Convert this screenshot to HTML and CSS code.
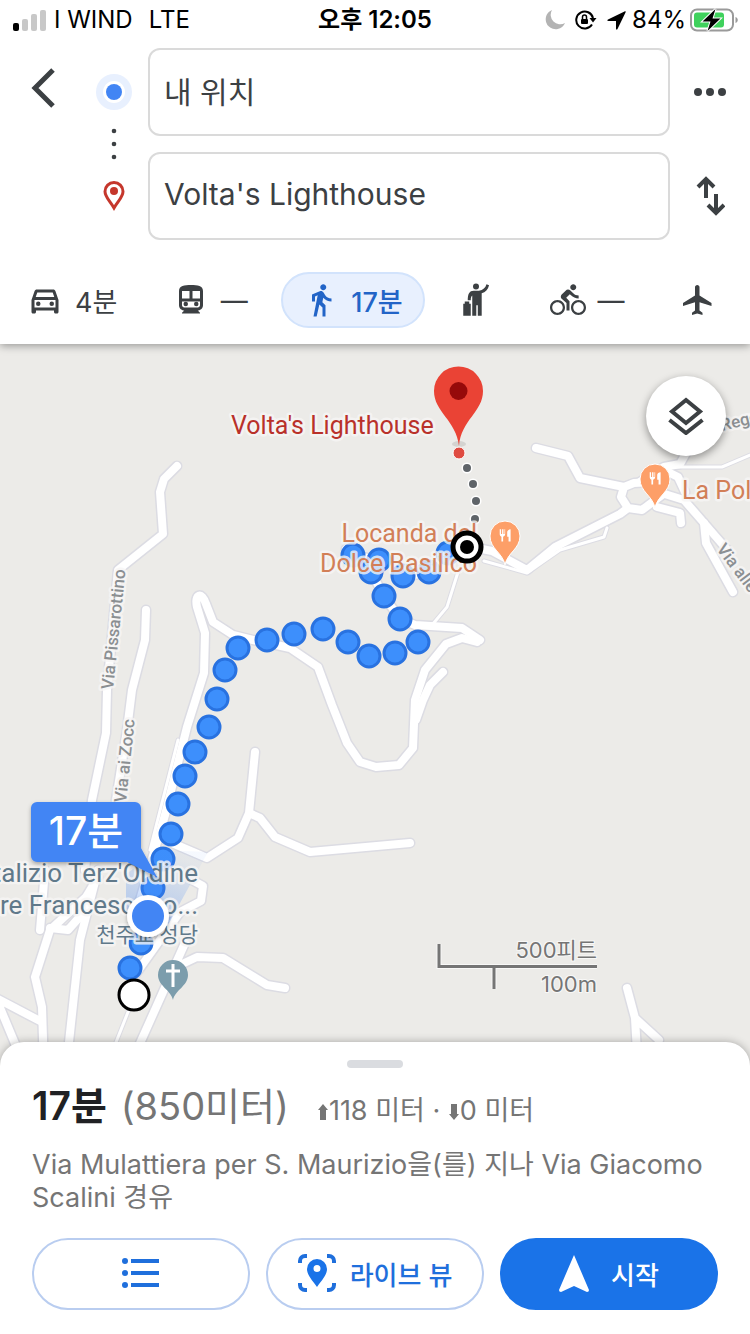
FILE: index.html
```html
<!DOCTYPE html>
<html lang="ko">
<head>
    <meta charset="UTF-8">
    <meta name="viewport" content="width=device-width, initial-scale=1.0">
    <title>Volta's Lighthouse</title>
    <link rel="stylesheet" href="styles.css">
</head>
<body>
    <header class="header">
        <div class="status-bar">
            <div class="status-left">
                <svg class="signal" width="34" height="22" viewBox="0 0 34 22">
                    <rect x="1" y="14" width="6" height="8" rx="2" fill="#000"/>
                    <rect x="10" y="10" width="6" height="12" rx="2" fill="#c8c8c8"/>
                    <rect x="19" y="5" width="6" height="17" rx="2" fill="#c8c8c8"/>
                    <rect x="28" y="1" width="6" height="21" rx="2" fill="#c8c8c8"/>
                </svg>
                <span>I WIND</span>
                <span class="network">LTE</span>
            </div>
            <div class="status-time">오후 12:05</div>
            <div class="status-right">
                <svg width="20" height="20" viewBox="0 0 20 20">
                    <path d="M7 0A10 10 0 1 0 20 13A9.500 9.500 0 0 1 7 0Z" fill="#b3b3b3"/>
                </svg>
                <svg class="lock" width="22" height="20" viewBox="0 0 22 20">
                    <path d="M17 14.500A8.500 8.500 0 1 1 18 8" fill="none" stroke="#000" stroke-width="2"/>
                    <path d="M14.500 8H21.500L18 12.500Z" fill="#000"/>
                    <rect x="6" y="9" width="7" height="5" rx="1" fill="#000"/>
                    <path d="M7.500 9V7a2 2 0 0 1 4 0V9" fill="none" stroke="#000" stroke-width="1.500"/>
                </svg>
                <svg width="19" height="19" viewBox="0 0 19 19">
                    <path d="M18.500 1.500C19 .5 18.500 0 17.500.5L1 8.500C0 9 0 10 1.500 10H9V17.500C9 19 10 19 10.500 18Z" fill="#000"/>
                </svg>
                <span class="percent">84%</span>
                <svg width="48" height="24" viewBox="0 0 48 24">
                    <rect x="1" y="1.500" width="42" height="21" rx="6" fill="none" stroke="#9a9a9a" stroke-width="2"/>
                    <rect x="4" y="4.500" width="30" height="15" rx="3" fill="#3fd15c"/>
                    <path d="M45.500 9v6c3-1 3-5 0-6z" fill="#9a9a9a"/>
                    <path d="M25.500 1L12.500 13.500h8L17.500 23L30.500 10.500h-8z" fill="#000" stroke="#fff" stroke-width="2" paint-order="stroke"/>
                </svg>
            </div>
        </div>

        <form class="route-form">
            <button type="button" class="icon-btn back-btn" aria-label="뒤로">
                <svg width="32" height="42" viewBox="0 0 32 42">
                    <path d="M26 3L8 21L26 39" fill="none" stroke="#3c4043" stroke-width="5"/>
                </svg>
            </button>
            <div class="route-marks">
                <svg width="40" height="192" viewBox="0 0 40 192">
                    <circle cx="20" cy="44" r="18" fill="#e8f0fe"/>
                    <circle cx="20" cy="44" r="11" fill="#fff"/>
                    <circle cx="20" cy="44" r="8" fill="#4285f4"/>
                    <g fill="#3c4043">
                        <circle cx="20" cy="83" r="2.300"/>
                        <circle cx="20" cy="96" r="2.300"/>
                        <circle cx="20" cy="109" r="2.300"/>
                    </g>
                    <path d="M20 160C16 153 11 149 11 143.500a9 9 0 0 1 18 0C29 149 24 153 20 160Z" fill="none" stroke="#c5372c" stroke-width="3"/>
                    <circle cx="20" cy="143" r="4" fill="#c5372c"/>
                </svg>
            </div>
            <input class="route-input" type="text" value="내 위치" aria-label="출발지">
            <button type="button" class="icon-btn" aria-label="더보기">
                <svg width="32" height="8" viewBox="0 0 32 8" fill="#3c4043">
                    <circle cx="4" cy="4" r="4"/>
                    <circle cx="16" cy="4" r="4"/>
                    <circle cx="28" cy="4" r="4"/>
                </svg>
            </button>
            <input class="route-input" type="text" value="Volta's Lighthouse" aria-label="도착지">
            <button type="button" class="icon-btn" aria-label="출발지와 도착지 바꾸기">
                <svg width="30" height="40" viewBox="0 0 30 40" fill="none" stroke="#3c4043" stroke-width="4">
                    <path d="M11 22V4M3 11L11 3L19 11M21 18V36M13 29L21 37L29 29"/>
                </svg>
            </button>
        </form>

        <nav class="modes">
            <button type="button" class="mode">
                <svg class="mode-icon" viewBox="0 0 24 24">
                    <path d="M18.920 6.010C18.720 5.420 18.160 5 17.500 5h-11c-.66 0-1.210.42-1.420 1.010L3 12v8c0 .55.45 1 1 1h1c.55 0 1-.45 1-1v-1h12v1c0 .55.45 1 1 1h1c.55 0 1-.45 1-1v-8zM6.850 7h10.290l1.040 3H5.810zM19 17H5v-5h14z"/>
                    <circle cx="7.500" cy="14.500" r="1.500"/>
                    <circle cx="16.500" cy="14.500" r="1.500"/>
                </svg>
                <span>4분</span>
            </button>
            <button type="button" class="mode">
                <svg class="mode-icon" viewBox="0 0 24 24">
                    <path fill-rule="evenodd" d="M12 2c-4.420 0-8 .5-8 4v9.500C4 17.430 5.570 19 7.500 19L6 20.500v.5h12v-.5L16.500 19c1.930 0 3.500-1.570 3.500-3.500V6c0-3.500-3.580-4-8-4zM6 6v5h5V6zM13 6v5h5V6zM6 13v2.500c0 .8.700 1.500 1.500 1.500h9c.8 0 1.500-.7 1.500-1.500V13z"/>
                    <circle cx="8.500" cy="14.700" r="1.500"/>
                    <circle cx="15.500" cy="14.700" r="1.500"/>
                </svg>
                <span>—</span>
            </button>
            <button type="button" class="mode mode-active">
                <svg class="mode-icon" viewBox="0 0 24 24">
                    <path d="M13.500 5.500c1.100 0 2-.9 2-2s-.9-2-2-2-2 .9-2 2 .9 2 2 2zM9.800 8.900L7 23h2.100l1.800-8 2.100 2v6h2v-7.500l-2.100-2 .6-3C14.800 12 16.800 13 19 13v-2c-1.900 0-3.500-1-4.300-2.400l-1-1.600c-.4-.6-1-1-1.700-1-.3 0-.5.1-.8.1L6 8.300V13h2V9.600z"/>
                </svg>
                <span>17분</span>
            </button>
            <button type="button" class="mode" aria-label="차량 서비스">
                <svg class="mode-icon" viewBox="0 0 24 24">
                    <circle cx="12" cy="3" r="2"/>
                    <path d="M10.500 5.800h3.500c2.700-.5 4.300-1.800 5-4.300l1.700.6c-.7 3-2.400 4.600-4.900 5.400V22.500h-2.600v-7h-1v7H9.500V9c-.7.600-1 1.500-1 3.200H6.500C6.500 8 7.500 5.800 10.500 5.800zM3.500 14.500h1v-1.500h3v1.500h1v8h-5z"/>
                </svg>
            </button>
            <button type="button" class="mode">
                <svg class="mode-icon" viewBox="0 0 24 24">
                    <path d="M15.500 5.500c1.100 0 2-.9 2-2s-.9-2-2-2-2 .9-2 2 .9 2 2 2zM5 12c-2.800 0-5 2.200-5 5s2.200 5 5 5 5-2.200 5-5-2.200-5-5-5zm0 8.500c-1.900 0-3.500-1.600-3.500-3.500s1.600-3.500 3.500-3.500 3.500 1.600 3.500 3.500-1.600 3.500-3.500 3.500zm5.800-10l2.400-2.400.8.800c1.300 1.300 3 2.100 5.100 2.100V9c-1.500 0-2.700-.6-3.600-1.500l-1.900-1.900c-.5-.4-1-.6-1.600-.6s-1.100.2-1.400.6L7.800 8.400c-.4.4-.6.9-.6 1.400 0 .6.2 1.100.6 1.400L11 14v5h2v-6.200zM19 12c-2.800 0-5 2.200-5 5s2.200 5 5 5 5-2.200 5-5-2.200-5-5-5zm0 8.500c-1.900 0-3.500-1.600-3.500-3.500s1.600-3.500 3.500-3.500 3.500 1.600 3.500 3.500-1.600 3.500-3.500 3.500z"/>
                </svg>
                <span>—</span>
            </button>
            <button type="button" class="mode" aria-label="항공편">
                <svg class="mode-icon" viewBox="0 0 24 24">
                    <path d="M21 16v-2l-8-5V3.500c0-.83-.67-1.500-1.500-1.500S10 2.670 10 3.500V9l-8 5v2l8-2.500V19l-2 1.500V22l3.500-1 3.500 1v-1.500L13 19v-5.500z"/>
                </svg>
            </button>
        </nav>
    </header>

    <main class="map">
        <svg class="map-canvas" viewBox="0 344 750 722" preserveAspectRatio="xMidYMin slice">
            <defs>
                <g id="roads-main">
                    <path d="M177 466L164 479L160 492L163 534L118 570L107 690L106 733L92 800L85 870"/>
                    <path d="M146 610L145 640L132 690L127 730L116 800"/>
                    <path d="M140 900L165 815L187 727L204 673L205 633L197 607C194 594 202 591 206 604L213 622L233 635L253 640L290 648L318 667L332 705L347 743L360 762L376 767L399 765L413 748L415 700L425 670L446 644L462 638L477 642"/>
                    <path d="M400 619L415 625L462 628L480 640"/>
                    <path d="M443 672L430 685L423 700L416 720"/>
                    <path d="M346 549L352 555L378 560M371 572L384 596L400 619M403 576L429 573L446 553L467 546L492 551L527 570L555 547L620 514L628 508"/>
                    <path d="M628 508L621 497L624 487L634 483L652 482L662 495L642 510Z"/>
                    <path d="M536 448L568 456L580 478L624 487"/>
                    <path d="M640 482L664 467L680 464L690 446"/>
                    <path d="M664 470L678 477L685 492M655 491L684 500L704 523L730 553"/>
                    <path d="M657 507L680 513L681 523M704 523L706 543L733 592"/>
                    <path d="M255 752L249 813L238 838L207 858L165 840M249 813L260 818L275 837L310 852L410 843"/>
                    <path d="M45 870L40 930M98 877L86 897L50 930L35 977L42 1007L44 1070"/>
                    <path d="M98 870L80 940L66 1070M50 928L68 930L84 912M-4 998L40 1021M-4 998L26 1070"/>
                    <path d="M285 988L267 985L223 958L197 957L178 966M185 943L167 983L128 1070"/>
                    <path d="M190 879L203 886L201 901L180 912L135 975"/>
                    <path d="M627 988L635 1018L659 1040M635 1018L638 1070"/>
                </g>
                <g id="roads-thin">
                    <path d="M458 572L447 607L432 625"/>
                    <path d="M676 467H722L755 453"/>
                    <path d="M484 561L527 573L560 550L604 537L607 528"/>
                    <path d="M128 1012L105 1070M178 740L150 850"/>
                </g>
                <g id="food-pin">
                    <path d="M0 24C-2 12-15 8-15-5a15 15 0 0 1 30 0C15 8 2 12 0 24Z" fill="#fd9f68" stroke="#fff" stroke-width="1"/>
                    <path transform="translate(-8 -13) scale(.68)" d="M11 9H9.500V2h-2v7H6V2H4v7c0 2 1 3.500 2.500 4V20H9v-7c1.700-.5 3-2 3-4V2h-1zM15 6v7h2v7h3V2c-2.800 0-5 2-5 4z" fill="#fff"/>
                </g>
                <linearGradient id="beam" x1="0" y1="1" x2="0.400" y2="0">
                    <stop offset="0" stop-color="#4285f4" stop-opacity="0.400"/>
                    <stop offset="1" stop-color="#4285f4" stop-opacity="0.050"/>
                </linearGradient>
                <filter id="shade" x="-20%" y="-20%" width="140%" height="150%">
                    <feDropShadow dx="0" dy="2" stdDeviation="2" flood-opacity="0.300"/>
                </filter>
            </defs>

            <rect x="-750" y="344" width="2250" height="1400" fill="#ecebe8"/>
            <use href="#roads-thin" class="road road-thin-edge"/>
            <use href="#roads-main" class="road road-edge"/>
            <use href="#roads-thin" class="road road-thin"/>
            <use href="#roads-main" class="road road-fill"/>

            <!-- walking route -->
            <g class="route-dots">
                <circle cx="353" cy="555" r="11"/>
                <circle cx="371" cy="572" r="11"/>
                <circle cx="379" cy="560" r="11"/>
                <circle cx="403" cy="576" r="11"/>
                <circle cx="429" cy="572" r="11"/>
                <circle cx="448" cy="553" r="11"/>
                <circle cx="384" cy="596" r="11"/>
                <circle cx="400" cy="619" r="11"/>
                <circle cx="418" cy="642" r="11"/>
                <circle cx="395" cy="653" r="11"/>
                <circle cx="369" cy="656" r="11"/>
                <circle cx="348" cy="642" r="11"/>
                <circle cx="323" cy="629" r="11"/>
                <circle cx="294" cy="634" r="11"/>
                <circle cx="267" cy="640" r="11"/>
                <circle cx="238" cy="648" r="11"/>
                <circle cx="225" cy="670" r="11"/>
                <circle cx="217" cy="699" r="11"/>
                <circle cx="209" cy="727" r="11"/>
                <circle cx="195" cy="752" r="11"/>
                <circle cx="185" cy="776" r="11"/>
                <circle cx="178" cy="804" r="11"/>
                <circle cx="171" cy="834" r="11"/>
                <circle cx="163" cy="859" r="11"/>
                <circle cx="153" cy="888" r="11"/>
                <circle cx="141" cy="943" r="11"/>
                <circle cx="130" cy="968" r="11"/>
            </g>
            <g class="link-dots">
                <circle cx="467" cy="468" r="4"/>
                <circle cx="473" cy="484" r="4"/>
                <circle cx="476" cy="501" r="4"/>
                <circle cx="475" cy="519" r="4"/>
            </g>
            <path d="M126 916V874L160 850L208 852L168 925Z" fill="url(#beam)"/>

            <!-- labels -->
            <text class="label label-street" transform="translate(113 690) rotate(-84)">Via Pissarottino</text>
            <text class="label label-street" transform="translate(126 803) rotate(-84)">Via ai Zocc</text>
            <text class="label label-street" transform="translate(716 549) rotate(53)">Via alle</text>
            <text class="label label-street" transform="translate(722 431) rotate(-14)">Rego</text>
            <text class="label label-dest" x="231" y="434">Volta's Lighthouse</text>
            <text class="label label-food" x="477" y="542" text-anchor="end">Locanda del</text>
            <text class="label label-food" x="477" y="572" text-anchor="end">Dolce Basilico</text>
            <text class="label label-food" x="682" y="499">La Pol</text>
            <text class="label label-church" x="198" y="882" text-anchor="end">italizio Terz'Ordine</text>
            <text class="label label-church" x="198" y="914" text-anchor="end">are Francescano...</text>
            <text class="label label-church label-church-ko" x="198" y="942" text-anchor="end">천주교 성당</text>

            <!-- pins -->
            <use href="#food-pin" x="505" y="541"/>
            <use href="#food-pin" x="655" y="484"/>
            <path d="M173 1000C171 990 158 986 158 975a15 15 0 0 1 30 0C188 986 175 990 173 1000Z" fill="#7c9dac"/>
            <path d="M173 964V987M166 971H180" stroke="#fff" stroke-width="3"/>
            <ellipse cx="459" cy="444" rx="7" ry="3" fill="#000" opacity="0.100"/>
            <path d="M459 446C456 420 434 412 434 391a24.500 24.500 0 0 1 49 0C483 412 461 420 459 446Z" fill="#ea4335"/>
            <circle cx="458.500" cy="391" r="9" fill="#960a0a"/>
            <circle cx="459" cy="453" r="6" fill="#df4b41" stroke="#fff" stroke-width="1"/>
            <circle cx="467" cy="547" r="14" fill="#fff" stroke="#000" stroke-width="5"/>
            <circle cx="467" cy="547" r="7" fill="#000"/>
            <circle cx="134" cy="995" r="15" fill="#fff" stroke="#000" stroke-width="3"/>
            <g filter="url(#shade)">
                <path d="M37 802H135a6 6 0 0 1 6 6V848L157 877L127 862H37a6 6 0 0 1-6-6V808a6 6 0 0 1 6-6Z" fill="#4285f4"/>
                <circle cx="148" cy="916" r="21" fill="#fff"/>
            </g>
            <circle cx="148" cy="916" r="16" fill="#4285f4"/>
            <text class="balloon-text" x="86" y="845" text-anchor="middle">17분</text>

            <!-- scale -->
            <path d="M439 944V966.500H597M494 966V989" class="scale-halo"/>
            <path d="M439 944V966.500H597M494 966V989" class="scale-line"/>
            <text class="scale-text" x="597" y="958" text-anchor="end">500피트</text>
            <text class="scale-text" x="597" y="992" text-anchor="end">100m</text>
        </svg>
        <button type="button" class="layers-btn" aria-label="지도 레이어">
            <svg width="36" height="38" viewBox="0 0 36 38" fill="none" stroke="#3c4043" stroke-width="4">
                <path d="M18 3L32 14.500L18 26L4 14.500ZM1.500 23L18 36L34.500 23"/>
            </svg>
        </button>
    </main>

    <section class="sheet">
        <div class="handle"></div>
        <div class="summary">
            <h1>17분 <span class="distance">(850미터)</span></h1>
            <p class="climb"><svg width="12" height="16" viewBox="0 0 12 16"><path d="M6 0L11 6H9V16H3V6H1Z"/></svg>118 미터 · <svg width="12" height="16" viewBox="0 0 12 16"><path d="M6 16L11 10H9V0H3V10H1Z"/></svg>0 미터</p>
        </div>
        <p class="via">Via Mulattiera per S. Maurizio을(를) 지나 Via Giacomo Scalini 경유</p>
        <div class="actions">
            <button type="button" class="action" aria-label="단계">
                <svg width="38" height="32" viewBox="0 0 38 32" fill="#1f6fdc">
                    <circle cx="3" cy="4" r="3"/>
                    <circle cx="3" cy="16" r="3"/>
                    <circle cx="3" cy="28" r="3"/>
                    <path d="M9 2H37V6H9ZM9 14H37V18H9ZM9 26H37V30H9Z"/>
                </svg>
            </button>
            <button type="button" class="action">
                <svg width="38" height="38" viewBox="0 0 38 38">
                    <path d="M2 9V7a5 5 0 0 1 5-5H9M29 2H31a5 5 0 0 1 5 5V9M36 29V31a5 5 0 0 1-5 5H29M9 36H7a5 5 0 0 1-5-5V29" fill="none" stroke="#1f6fdc" stroke-width="4"/>
                    <path fill-rule="evenodd" d="M19 33C14 26 9 21 9 15a10 10 0 0 1 20 0C29 21 24 26 19 33ZM19 11a3.500 3.500 0 1 0 0 7a3.500 3.500 0 1 0 0-7Z" fill="#1a73e8"/>
                </svg>
                <span>라이브 뷰</span>
            </button>
            <button type="button" class="action action-start">
                <svg width="30" height="38" viewBox="0 0 30 38">
                    <path d="M15 1L30 36Q30 38 28 38L15 32L2 38Q0 38 0 36Z" fill="#fff"/>
                </svg>
                <span>시작</span>
            </button>
        </div>
    </section>
</body>
</html>
```

FILE: styles.css
```css
* {
    box-sizing: border-box;
}
body {
    margin: 0;
    min-height: 100vh;
    display: flex;
    flex-direction: column;
    background-color: #fff;
    color: #3c4043;
    font-family: Inter, "Noto Sans CJK KR", sans-serif;
}
button {
    font-family: inherit;
    color: inherit;
    cursor: pointer;
}
svg {
    display: block;
    flex-shrink: 0;
}

/* header */
.header {
    position: relative;
    z-index: 1;
    background-color: #fff;
    box-shadow: 0 2px 8px rgba(0, 0, 0, 0.35);
}
.status-bar {
    display: grid;
    grid-template-columns: 1fr auto 1fr;
    align-items: center;
    height: 40px;
    padding: 0 12px;
    color: #000;
    font-size: 24px;
    line-height: 32px;
}
.status-left, .status-right {
    display: flex;
    align-items: center;
}
.status-left {
    gap: 8px;
}
.network {
    margin-left: 8px;
}
.status-time {
    font-weight: 600;
}
.status-right {
    justify-content: flex-end;
    gap: 10px;
}
.percent {
    margin: 0 -6px 0 -4px;
}
.route-form {
    display: grid;
    grid-template-columns: 80px 68px 1fr 80px;
    grid-template-rows: 88px 88px;
    row-gap: 16px;
    padding-top: 8px;
}
.icon-btn {
    display: flex;
    align-items: center;
    justify-content: center;
    padding: 0;
    border: none;
    background: none;
}
.back-btn {
    padding: 0 0 8px 6px;
}
.route-marks {
    grid-row: 1 / 3;
    grid-column: 2;
    display: flex;
    justify-content: center;
}
.route-input {
    grid-column: 3;
    min-width: 0;
    padding: 0 14px 4px;
    border: 2px solid #dadada;
    border-radius: 12px;
    background-color: #fff;
    color: #3c4043;
    font-family: inherit;
    font-size: 30px;
}
.modes {
    display: flex;
    justify-content: space-between;
    padding: 32px 12px 16px 5px;
}
.mode {
    display: flex;
    align-items: center;
    gap: 12px;
    height: 56px;
    padding: 0 20px;
    border: 2px solid transparent;
    border-radius: 28px;
    background: none;
    font-size: 27px;
}
.mode-icon {
    width: 36px;
    height: 36px;
    fill: #3c4043;
}
.mode-active {
    border-color: #d2e3fc;
    background-color: #e8f0fe;
    color: #2264c7;
    font-weight: 500;
}
.mode-active .mode-icon {
    fill: #2264c7;
}

/* map */
.map {
    position: relative;
    flex: 1 0 auto;
    display: flex;
    min-height: 480px;
    background-color: #ecebe8;
    overflow: hidden;
}
.map-canvas {
    position: absolute;
    width: 100%;
    height: 100%;
}
.road {
    fill: none;
    stroke-linecap: round;
    stroke-linejoin: round;
}
.road-edge {
    stroke: #dcdce3;
    stroke-width: 11px;
}
.road-fill {
    stroke: #fff;
    stroke-width: 8px;
}
.road-thin-edge {
    stroke: #dcdce3;
    stroke-width: 5px;
}
.road-thin {
    stroke: #fff;
    stroke-width: 3px;
}
.route-dots {
    fill: #3d8ffc;
    stroke: #2972e0;
    stroke-width: 3px;
}
.link-dots {
    fill: #5f6469;
    stroke: #fff;
    stroke-width: 3px;
    paint-order: stroke;
}
.label {
    font-family: Roboto, "Noto Sans CJK KR", sans-serif;
    font-size: 25px;
    stroke: #f7f6f5;
    stroke-width: 5px;
    stroke-opacity: 0.8;
    stroke-linejoin: round;
    paint-order: stroke;
}
.label-street {
    font-size: 17px;
    font-weight: 500;
    fill: #8b8f92;
}
.label-dest {
    fill: #b9312a;
}
.label-food {
    fill: #d27f57;
}
.label-church {
    fill: #60798a;
    font-size: 26px;
}
.label-church-ko {
    font-size: 21px;
}
.balloon-text {
    fill: #fff;
    font-size: 39px;
    font-weight: 500;
}
.scale-line, .scale-halo {
    fill: none;
    stroke: #757575;
    stroke-width: 3px;
}
.scale-halo {
    stroke: #f8f8f7;
    stroke-width: 5px;
}
.scale-text {
    fill: #757575;
    stroke: #f8f8f7;
    stroke-width: 2px;
    paint-order: stroke;
    font-size: 22px;
}
.layers-btn {
    position: absolute;
    top: 32px;
    right: 24px;
    display: flex;
    align-items: center;
    justify-content: center;
    width: 80px;
    height: 80px;
    padding: 0;
    border: none;
    border-radius: 50%;
    background-color: #fff;
    box-shadow: 0 3px 8px rgba(0, 0, 0, 0.4);
}

/* bottom sheet */
.sheet {
    position: relative;
    margin-top: -24px;
    padding: 18px 32px 24px;
    border-radius: 24px 24px 0 0;
    background-color: #fff;
    box-shadow: 0 0 8px rgba(0, 0, 0, 0.3);
    color: #757575;
}
.handle {
    width: 56px;
    height: 8px;
    margin: 0 auto;
    border-radius: 4px;
    background-color: #dadce0;
}
.summary {
    display: flex;
    align-items: baseline;
    gap: 28px;
    margin-top: 14px;
}
.summary h1 {
    margin: 0;
    color: #202124;
    font-size: 39px;
    font-weight: 600;
    line-height: 48px;
}
.distance {
    margin-left: 4px;
    color: #757575;
    font-size: 38px;
    font-weight: 400;
}
.climb {
    margin: 0;
    font-size: 27px;
    line-height: 32px;
}
.climb svg {
    display: inline-block;
    fill: #757575;
}
.via {
    margin: 18px 0 24px;
    font-size: 27px;
    line-height: 33px;
}
.actions {
    display: grid;
    grid-template-columns: repeat(3, 1fr);
    gap: 16px;
}
.action {
    display: flex;
    align-items: center;
    justify-content: center;
    gap: 14px;
    height: 72px;
    padding: 0 0 2px;
    border: 2px solid #b9cdf0;
    border-radius: 36px;
    background-color: #fff;
    color: #1f6fdc;
    font-size: 26px;
    font-weight: 500;
}
.action-start {
    gap: 22px;
    border-color: #1a73e8;
    background-color: #1a73e8;
    color: #fff;
}
```
